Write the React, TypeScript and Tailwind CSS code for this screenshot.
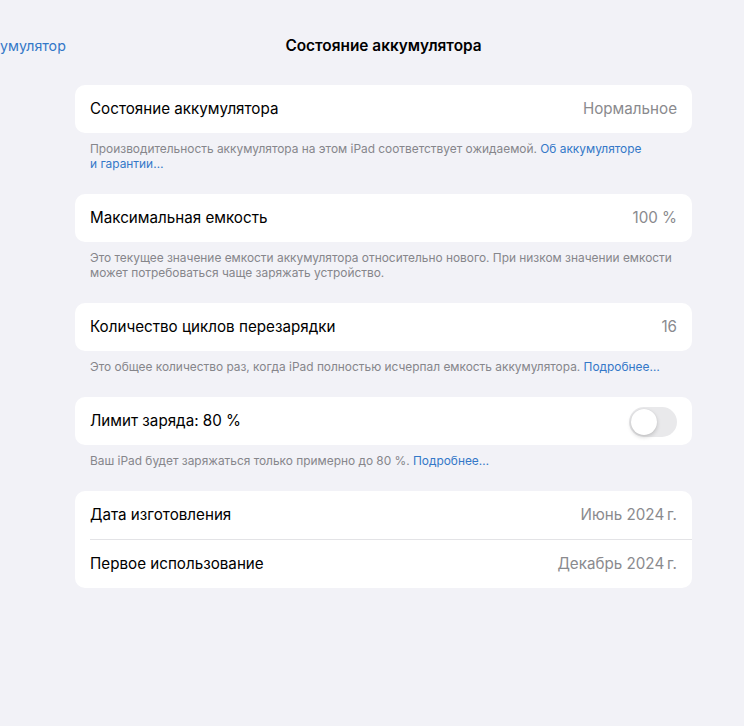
import { ReactNode } from "react";

function Row({ label, value, children }: { label: string; value?: string; children?: ReactNode }) {
  return (
    <div className="flex h-12 items-center justify-between pl-[15px] pr-[15px] pt-px">
      <span className="text-[15.2px] text-black">{label}</span>
      {value && <span className="text-[15.2px] text-[#8a8a8e]">{value}</span>}
      {children}
    </div>
  );
}

function Card({ children }: { children: ReactNode }) {
  return <div className="overflow-hidden rounded-[10px] bg-white">{children}</div>;
}

function Footer({ children }: { children: ReactNode }) {
  return (
    <div className="px-[15px] pb-[23px] pt-[8px] text-[11.9px] leading-[15px] text-[#86868b]">{children}</div>
  );
}

function Link({ children }: { children: ReactNode }) {
  return <span className="text-[#3478c8]">{children}</span>;
}

function Toggle() {
  return (
    <div className="flex h-[30px] w-[48px] items-center rounded-full bg-[#e9e9eb] p-[2px]">
      <div className="h-[26px] w-[26px] rounded-full bg-white shadow-[0_2px_4px_rgba(0,0,0,0.18),0_0_1px_rgba(0,0,0,0.1)]" />
    </div>
  );
}

export default function App() {
  return (
    <div
      className="min-h-screen w-[744px] overflow-hidden bg-[#f2f2f7]"
      style={{ fontFamily: "Inter, 'Noto Sans', sans-serif" }}
    >
      {/* nav bar */}
      <div className="flex h-[85px] items-center pt-[7px]">
        <div className="w-[75px] shrink-0 text-[14.2px] text-[#3478c8]">умулятор</div>
        <div className="w-[617px] text-center text-[15.4px] font-semibold text-black">Состояние аккумулятора</div>
      </div>

      <div className="ml-[75px] w-[617px]">
        <Card>
          <Row label="Состояние аккумулятора" value="Нормальное" />
        </Card>
        <Footer>
          Производительность аккумулятора на этом iPad соответствует ожидаемой. <Link>Об аккумуляторе</Link>
          <br />
          <Link>и гарантии…</Link>
        </Footer>

        <Card>
          <Row label="Максимальная емкость" value="100 %" />
        </Card>
        <Footer>
          Это текущее значение емкости аккумулятора относительно нового. При низком значении емкости
          <br />
          может потребоваться чаще заряжать устройство.
        </Footer>

        <Card>
          <Row label="Количество циклов перезарядки" value="16" />
        </Card>
        <Footer>
          Это общее количество раз, когда iPad полностью исчерпал емкость аккумулятора. <Link>Подробнее…</Link>
        </Footer>

        <Card>
          <Row label="Лимит заряда: 80 %">
            <Toggle />
          </Row>
        </Card>
        <Footer>
          Ваш iPad будет заряжаться только примерно до 80 %. <Link>Подробнее…</Link>
        </Footer>

        <Card>
          <Row label="Дата изготовления" value={"Июнь 2024\u2009г."} />
          <div className="ml-[15px] h-px bg-[#e3e3e6]" />
          <Row label="Первое использование" value={"Декабрь 2024\u2009г."} />
        </Card>
      </div>
    </div>
  );
}
